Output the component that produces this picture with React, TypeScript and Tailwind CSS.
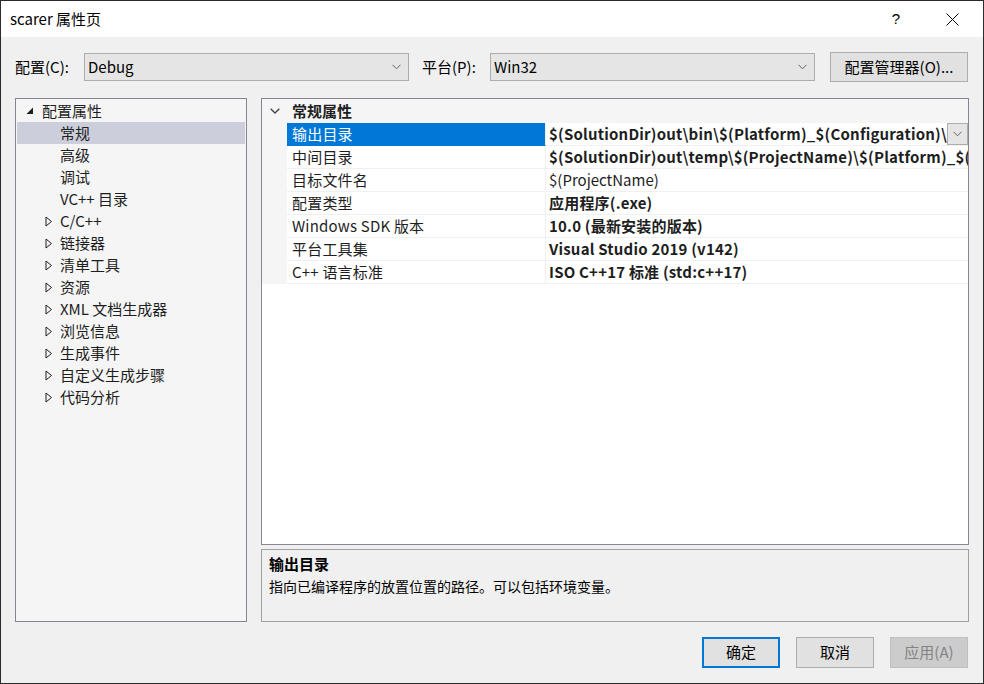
import React from "react";

// =========================
// DATA
// =========================
const TREE_CHILDREN = ["常规", "高级", "调试", "VC++ 目录"];
const TREE_GROUPS = [
  "C/C++",
  "链接器",
  "清单工具",
  "资源",
  "XML 文档生成器",
  "浏览信息",
  "生成事件",
  "自定义生成步骤",
  "代码分析",
];

const PROPS: { name: string; value: string; bold: boolean }[] = [
  { name: "输出目录", value: "$(SolutionDir)out\\bin\\$(Platform)_$(Configuration)\\", bold: true },
  { name: "中间目录", value: "$(SolutionDir)out\\temp\\$(ProjectName)\\$(Platform)_$(Configuration)\\", bold: true },
  { name: "目标文件名", value: "$(ProjectName)", bold: false },
  { name: "配置类型", value: "应用程序(.exe)", bold: true },
  { name: "Windows SDK 版本", value: "10.0 (最新安装的版本)", bold: true },
  { name: "平台工具集", value: "Visual Studio 2019 (v142)", bold: true },
  { name: "C++ 语言标准", value: "ISO C++17 标准 (std:c++17)", bold: true },
];

const FONT = "font-['Noto_Sans_CJK_SC',_sans-serif]";

// =========================
// SMALL PIECES
// =========================
function ComboChevron() {
  return (
    <svg width="9" height="6" viewBox="0 0 9 6" className="shrink-0">
      <path d="M0.5 0.8 L4.5 4.8 L8.5 0.8" fill="none" stroke="#606060" strokeWidth="1" />
    </svg>
  );
}

function Combo({ value }: { value: string }) {
  return (
    <div className="w-[325px] h-[28px] border border-[#adadad] bg-[#e5e5e5] flex items-center pl-[3px] pr-[7px]">
      <span className="flex-1 text-[15px] text-black">{value}</span>
      <ComboChevron />
    </div>
  );
}

function Button({
  label,
  primary,
  disabled,
}: {
  label: string;
  primary?: boolean;
  disabled?: boolean;
}) {
  const cls = primary
    ? "border-2 border-[#0078d7] bg-[#e1e1e1] text-black"
    : disabled
    ? "border border-[#bfbfbf] bg-[#cccccc] text-[#838383]"
    : "border border-[#adadad] bg-[#e1e1e1] text-black";
  return (
    <div className={`w-[78px] h-[31px] flex items-center justify-center text-[15px] ${cls}`}>
      {label}
    </div>
  );
}

// =========================
// TREE
// =========================
function Tree() {
  return (
    <div className="w-[232px] h-full border border-[#828790] bg-[#f5f5f5] pt-[1px] px-[1px]">
      <div className="h-[22px] flex items-center">
        <svg width="8" height="8" viewBox="0 0 8 8" className="ml-[9px] mr-[8px]">
          <path d="M7 0.5 L7 7 L0.5 7 Z" fill="#1e1e1e" />
        </svg>
        <span className="text-[15px] text-[#1e1e1e]">配置属性</span>
      </div>
      {TREE_CHILDREN.map((t, i) => (
        <div
          key={t}
          className={`h-[22px] flex items-center pl-[43px] ${i === 0 ? "bg-[#cccedb]" : ""}`}
        >
          <span className="text-[15px] text-[#1e1e1e]">{t}</span>
        </div>
      ))}
      {TREE_GROUPS.map((t) => (
        <div key={t} className="h-[22px] flex items-center">
          <svg width="8" height="11" viewBox="0 0 8 11" className="ml-[28px] mr-[7px]">
            <path d="M1 1 L6.5 5.5 L1 10 Z" fill="none" stroke="#1e1e1e" strokeWidth="1" />
          </svg>
          <span className="text-[15px] text-[#1e1e1e]">{t}</span>
        </div>
      ))}
    </div>
  );
}

// =========================
// PROPERTY GRID
// =========================
function Grid() {
  return (
    <div className="h-[447px] border border-[#828790] bg-white flex flex-col">
      {/* category header */}
      <div className="h-[24px] bg-[#f5f5f5] flex items-center shrink-0">
        <svg width="10" height="6" viewBox="0 0 10 6" className="ml-[8px] mr-[12px]">
          <path d="M0.7 0.7 L5 5 L9.3 0.7" fill="none" stroke="#404040" strokeWidth="1.3" />
        </svg>
        <span className="text-[15px] font-bold text-[#1e1e1e]">常规属性</span>
      </div>

      {PROPS.map((p, i) => (
        <div key={p.name} className="h-[23px] flex shrink-0">
          <div className="w-[25px] bg-[#f5f5f5]" />
          <div
            className={`w-[259px] border-b border-r border-[#f0f0f0] flex items-center pl-[5px] overflow-hidden whitespace-nowrap text-[15px] tracking-[0.2px] ${
              i === 0 ? "bg-[#0078d7] text-white border-b-[#0078d7]" : "text-[#1e1e1e]"
            }`}
          >
            {p.name}
          </div>
          <div className="flex-1 min-w-0 border-b border-[#f0f0f0] flex items-center">
            <div
              className={`flex-1 min-w-0 overflow-hidden whitespace-nowrap pl-[3px] text-[15px] text-[#1e1e1e] ${
                p.bold ? "font-bold tracking-[0.2px]" : ""
              }`}
            >
              {p.value}
            </div>
            {i === 0 && (
              <div className="w-[21px] h-[22px] border border-[#adadad] bg-[#e5e5e5] flex items-center justify-center shrink-0">
                <ComboChevron />
              </div>
            )}
          </div>
        </div>
      ))}
    </div>
  );
}

// =========================
// APP
// =========================
export default function App() {
  return (
    <div
      className={`w-[984px] h-[684px] border border-[#2b2b2b] flex flex-col bg-[#f0f0f0] overflow-hidden ${FONT}`}
    >
      {/* TITLE BAR */}
      <div className="h-[36px] bg-white flex items-center shrink-0">
        <span className="ml-[9px] text-[15px] text-black">scarer 属性页</span>
        <span className="ml-auto text-[15px] text-black font-['Liberation_Sans',_sans-serif]">?</span>
        <svg width="13" height="13" viewBox="0 0 13 13" className="ml-[46px] mr-[24px]">
          <path d="M0.5 0.5 L12.5 12.5 M12.5 0.5 L0.5 12.5" stroke="#000" strokeWidth="1" />
        </svg>
      </div>

      {/* BODY */}
      <div className="flex-1 flex flex-col pl-[14px] pr-[14px]">
        {/* CONFIG ROW */}
        <div className="h-[30px] mt-[15px] flex items-center shrink-0">
          <span className="w-[69px] text-[15px] text-black">配置(C):</span>
          <Combo value="Debug" />
          <span className="ml-[13px] w-[68px] text-[15px] text-black">平台(P):</span>
          <Combo value="Win32" />
          <div className="ml-[15px] w-[138px] h-[30px] border border-[#adadad] bg-[#e1e1e1] flex items-center justify-center text-[15px] text-black">
            配置管理器(O)...
          </div>
        </div>

        {/* MAIN */}
        <div className="mt-[16px] h-[524px] flex gap-[14px] shrink-0">
          <Tree />
          <div className="w-[708px] flex flex-col gap-[4px]">
            <Grid />
            <div className="h-[73px] border border-[#a0a0a0] bg-[#f0f0f0] px-[7px] pt-[2px]">
              <div className="text-[15px] font-bold text-black leading-[24px]">输出目录</div>
              <div className="text-[14px] text-black leading-[20px]">
                指向已编译程序的放置位置的路径。可以包括环境变量。
              </div>
            </div>
          </div>
        </div>

        {/* BUTTONS */}
        <div className="mt-[15px] flex justify-end gap-[16px] pr-[1px]">
          <Button label="确定" primary />
          <Button label="取消" />
          <Button label="应用(A)" disabled />
        </div>
      </div>
    </div>
  );
}
